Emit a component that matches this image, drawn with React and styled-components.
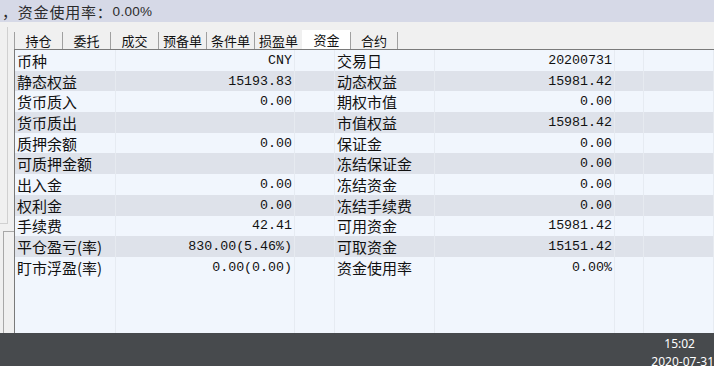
import React from 'react';
import styled, { createGlobalStyle } from 'styled-components';

const GlobalStyle = createGlobalStyle`
  html, body {
    margin: 0;
    padding: 0;
    background: #f0f0f0;
    overflow: hidden;
  }
`;

const Page = styled.div`
  display: flex;
  flex-direction: column;
  width: 714px;
  height: 366px;
  font-family: "Noto Sans CJK SC", "Noto Sans", sans-serif;
`;

const TopBar = styled.div`
  height: 22px;
  background: #d6d9e7;
  display: flex;
  align-items: center;
  padding-left: 2px;
  font-size: 15px;
  letter-spacing: 0.8px;
  color: #2b2b2b;
  white-space: nowrap;
  span {
    font-family: "Liberation Sans", Arial, sans-serif;
    font-size: 13.5px;
    letter-spacing: 0.3px;
  }
`;

const Main = styled.div`
  flex: 1;
  display: flex;
  min-height: 0;
  background: #f0f0f0;
`;

const Side = styled.div`
  width: 14px;
  display: flex;
  flex-direction: column;
  padding-top: 5px;
  gap: 7px;
`;

const SideBox = styled.div`
  height: 196px;
  width: 7px;
  border-right: 1px solid #d0d0d0;
  border-bottom: 1px solid #d0d0d0;
`;

const SideLower = styled.div`
  flex: 1;
  margin-left: 3px;
  border-left: 1px solid #a8a8a8;
  border-top: 1px solid #a8a8a8;
`;

const Content = styled.div`
  flex: 1;
  display: flex;
  flex-direction: column;
  padding-top: 8px;
  min-width: 0;
  overflow: hidden;
`;

const TabBar = styled.div`
  display: flex;
  align-items: flex-end;
  height: 19px;
`;

const Tab = styled.div`
  width: 48px;
  height: ${p => (p.$active ? '19px' : '17px')};
  box-sizing: border-box;
  display: flex;
  align-items: center;
  justify-content: center;
  font-size: 13px;
  color: #111;
  background: ${p => (p.$active ? '#ffffff' : '#f0f0f0')};
  border-left: 1px solid ${p => (p.$active ? '#ffffff' : '#a0a0a0')};
  &:last-child {
    border-right: 1px solid #a0a0a0;
  }
`;

const Grid = styled.div`
  flex: 1;
  border-top: 1px solid #7a7a7a;
  border-left: 1px solid #7a7a7a;
  background: #f1f6fd;
  overflow: hidden;
`;

const Row = styled.div`
  display: grid;
  grid-template-columns: 101px 179px 40px 100px 180px 29px 70px;
  height: 20.7px;
  background: ${p => (p.$alt ? '#dee2ea' : '#f1f6fd')};
`;

const Cell = styled.div`
  border-right: 1px solid ${p => (p.$alt ? '#e6eaf0' : '#e6ebf2')};
  display: flex;
  align-items: center;
  overflow: hidden;
  white-space: nowrap;
`;

const Label = styled(Cell)`
  padding-left: 2px;
  font-size: 15px;
  color: #111;
`;

const Value = styled(Cell)`
  justify-content: flex-end;
  padding-right: 2px;
  font-family: "Liberation Mono", "Noto Sans CJK SC", monospace;
  font-size: 13.3px;
  color: #111;
`;

const Taskbar = styled.div`
  height: 33px;
  background: #474a4d;
  display: flex;
  flex-direction: column;
  align-items: flex-end;
  justify-content: space-between;
  padding: 4px 0 0;
  box-sizing: border-box;
  color: #ffffff;
  font-family: "Noto Sans", "Liberation Sans", sans-serif;
  font-size: 12px;
  line-height: 14px;
  div:first-child {
    margin-right: 19px;
  }
  div:last-child {
    margin-bottom: -3px;
    margin-right: 0px;
  }
`;

const tabs = ['持仓', '委托', '成交', '预备单', '条件单', '损盈单', '资金', '合约'];

const rows = [
  ['币种', 'CNY', '交易日', '20200731'],
  ['静态权益', '15193.83', '动态权益', '15981.42'],
  ['货币质入', '0.00', '期权市值', '0.00'],
  ['货币质出', '', '市值权益', '15981.42'],
  ['质押余额', '0.00', '保证金', '0.00'],
  ['可质押金额', '', '冻结保证金', '0.00'],
  ['出入金', '0.00', '冻结资金', '0.00'],
  ['权利金', '0.00', '冻结手续费', '0.00'],
  ['手续费', '42.41', '可用资金', '15981.42'],
  ['平仓盈亏(率)', '830.00(5.46%)', '可取资金', '15151.42'],
  ['盯市浮盈(率)', '0.00(0.00)', '资金使用率', '0.00%'],
  ['', '', '', ''],
  ['', '', '', ''],
  ['', '', '', ''],
];

export default function App() {
  return (
    <Page>
      <GlobalStyle />
      <TopBar>，资金使用率：<span>0.00%</span></TopBar>
      <Main>
        <Side>
          <SideBox />
          <SideLower />
        </Side>
        <Content>
          <TabBar>
            {tabs.map(t => (
              <Tab key={t} $active={t === '资金'}>{t}</Tab>
            ))}
          </TabBar>
          <Grid>
            {rows.map((r, i) => {
              const alt = i % 2 === 1 && i < 11;
              return (
                <Row key={i} $alt={alt}>
                  <Label $alt={alt}>{r[0]}</Label>
                  <Value $alt={alt}>{r[1]}</Value>
                  <Cell $alt={alt} />
                  <Label $alt={alt}>{r[2]}</Label>
                  <Value $alt={alt}>{r[3]}</Value>
                  <Cell $alt={alt} />
                  <Cell $alt={alt} />
                </Row>
              );
            })}
          </Grid>
        </Content>
      </Main>
      <Taskbar>
        <div>15:02</div>
        <div>2020-07-31</div>
      </Taskbar>
    </Page>
  );
}
